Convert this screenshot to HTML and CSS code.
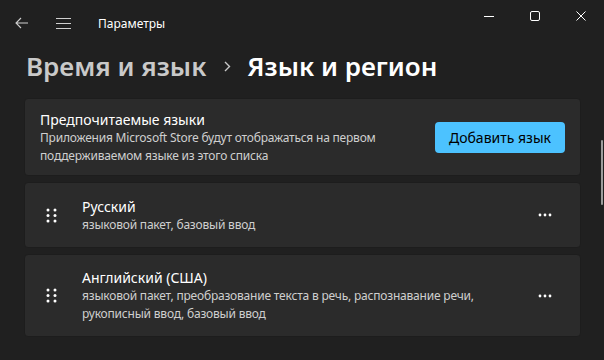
FILE: index.html
```
<!DOCTYPE html>
<html lang="ru">
<head>
  <meta charset="UTF-8">
  <title>Параметры</title>
  <link rel="stylesheet" href="styles.css">
</head>
<body>
  <div class="window">
    <!-- заголовок окна -->
    <div class="titlebar">
      <span class="tb-icon back">
        <svg width="14" height="12" viewBox="0 0 14 12"><path d="M6 1 L1 6 L6 11 M1 6 H13" fill="none" stroke="#cfcfcf" stroke-width="1.1"/></svg>
      </span>
      <span class="tb-icon menu">
        <svg width="15" height="11" viewBox="0 0 15 11"><path d="M0 0.5 H15 M0 5.5 H15 M0 10.5 H15" fill="none" stroke="#d0d0d0" stroke-width="1"/></svg>
      </span>
      <span class="app-title">Параметры</span>
      <div class="controls">
        <span class="ctl"><svg width="10" height="10" viewBox="0 0 10 10"><path d="M0 5.5 H10" stroke="#fff" stroke-width="1"/></svg></span>
        <span class="ctl"><svg width="10" height="10" viewBox="0 0 10 10"><rect x="0.5" y="0.5" width="9" height="9" rx="1.5" fill="none" stroke="#fff" stroke-width="1"/></svg></span>
        <span class="ctl"><svg width="10" height="10" viewBox="0 0 10 10"><path d="M0.5 0.5 L9.5 9.5 M9.5 0.5 L0.5 9.5" stroke="#fff" stroke-width="1"/></svg></span>
      </div>
    </div>

    <!-- хлебные крошки -->
    <div class="crumbs">
      <span class="crumb-prev">Время и язык</span>
      <svg class="chev" width="7" height="11" viewBox="0 0 7 11"><path d="M1 1 L5.5 5.5 L1 10" fill="none" stroke="#c8c8c8" stroke-width="1.4"/></svg>
      <span class="crumb-cur">Язык и регион</span>
    </div>

    <div class="content">
      <div class="card head-card">
        <div class="card-text">
          <div class="card-title">Предпочитаемые языки</div>
          <div class="card-desc">Приложения Microsoft Store будут отображаться на первом<br>поддерживаемом языке из этого списка</div>
        </div>
        <button class="accent">Добавить язык</button>
      </div>

      <div class="card lang">
        <span class="grip">
          <svg width="11" height="15" viewBox="0 0 11 15"><g fill="#fff"><circle cx="2" cy="2" r="1.5"/><circle cx="9" cy="2" r="1.5"/><circle cx="2" cy="7.5" r="1.5"/><circle cx="9" cy="7.5" r="1.5"/><circle cx="2" cy="13" r="1.5"/><circle cx="9" cy="13" r="1.5"/></g></svg>
        </span>
        <div class="card-text">
          <div class="card-title">Русский</div>
          <div class="card-desc">языковой пакет, базовый ввод</div>
        </div>
        <span class="more">
          <svg width="14" height="4" viewBox="0 0 14 4"><g fill="#fff"><circle cx="2" cy="2" r="1.4"/><circle cx="7" cy="2" r="1.4"/><circle cx="12" cy="2" r="1.4"/></g></svg>
        </span>
      </div>

      <div class="card lang tall">
        <span class="grip">
          <svg width="11" height="15" viewBox="0 0 11 15"><g fill="#fff"><circle cx="2" cy="2" r="1.5"/><circle cx="9" cy="2" r="1.5"/><circle cx="2" cy="7.5" r="1.5"/><circle cx="9" cy="7.5" r="1.5"/><circle cx="2" cy="13" r="1.5"/><circle cx="9" cy="13" r="1.5"/></g></svg>
        </span>
        <div class="card-text">
          <div class="card-title">Английский (США)</div>
          <div class="card-desc">языковой пакет, преобразование текста в речь, распознавание речи,<br>рукописный ввод, базовый ввод</div>
        </div>
        <span class="more">
          <svg width="14" height="4" viewBox="0 0 14 4"><g fill="#fff"><circle cx="2" cy="2" r="1.4"/><circle cx="7" cy="2" r="1.4"/><circle cx="12" cy="2" r="1.4"/></g></svg>
        </span>
      </div>
    </div>

    <div class="scrollbar"></div>
  </div>
</body>
</html>
```

FILE: styles.css
```
body { margin: 0; background: #202020; font-family: "Noto Sans", "Open Sans", sans-serif; color: #fff; }
.window { position: relative; width: 604px; height: 360px; overflow: hidden; background: #202020; }

.titlebar { display: flex; align-items: center; height: 46px; }
.tb-icon { display: flex; align-items: center; justify-content: center; }
.back { margin-left: 15px; width: 14px; }
.menu { margin-left: 27px; width: 15px; }
.app-title { margin-left: 27px; font-size: 12px; color: #fff; }
.controls { margin-left: auto; display: flex; align-self: flex-start; }
.ctl { width: 46px; height: 32px; display: flex; align-items: center; justify-content: center; }

.crumbs { display: flex; align-items: center; padding-left: 26px; height: 40px; font-size: 26px; font-weight: 600; }
.crumb-prev { color: #c9c9c9; }
.chev { margin: 0 16px 0 18px; }
.crumb-cur { color: #fff; }

.content { display: flex; flex-direction: column; gap: 6px; margin: 12px 23px 0 24px; }
.card { display: flex; align-items: center; background: #2b2b2b; border: 1px solid #1d1d1d; border-radius: 4px; }
.head-card { height: 76px; padding: 0 15px; }
.card-text { flex: 1; }
.card-title { font-size: 14px; line-height: 19px; color: #fff; }
.card-desc { font-size: 12px; line-height: 18px; color: #cfcfcf; letter-spacing: -0.2px; }
.accent { width: 130px; height: 31px; border: none; border-radius: 4px; background: #4cc2ff; color: #000; font-family: inherit; font-size: 14px; padding: 0; }

.lang { height: 64px; }
.lang.tall { height: 81px; }
.grip { width: 11px; margin: 0 25px 0 21px; display: flex; }
.more { width: 14px; margin-right: 28px; display: flex; }

.scrollbar { position: absolute; right: 1px; top: 140px; width: 2px; height: 65px; background: #9d9d9d; border-radius: 1px; }
```
